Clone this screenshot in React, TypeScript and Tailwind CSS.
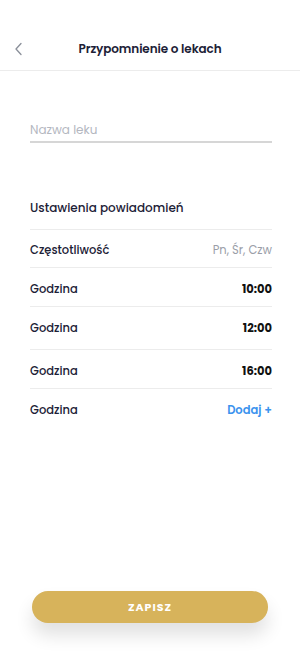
const font = { fontFamily: '"Poppins", Inter, "Noto Sans", sans-serif' };

const rows = [
  { label: "Godzina", value: "10:00" },
  { label: "Godzina", value: "12:00" },
  { label: "Godzina", value: "16:00" },
];

const App = () => {
  return (
    <div className="w-[300px] h-[655px] bg-white flex flex-col" style={font}>
      <div className="h-[71px] border-b border-[#ececec] flex items-end pb-[12px] relative">
        <button className="absolute left-[13px] bottom-[14px] text-[#8a8f99]">
          <svg width="12" height="14" viewBox="0 0 12 14" fill="none">
            <path d="M8 1.5L3 7l5 5.5" stroke="currentColor" strokeWidth="1.3" strokeLinecap="round" strokeLinejoin="round" />
          </svg>
        </button>
        <h1 className="w-full text-center text-[12px] font-semibold text-[#1c2136] tracking-[-0.1px]">
          Przypomnienie o lekach
        </h1>
      </div>

      <div className="pl-[30px] pr-[28px] flex flex-col">
        <div className="mt-[50px] pb-[2px] border-b-2 border-[#d6d6d6] text-[12px] text-[#b4b7bf]">
          Nazwa leku
        </div>

        <h2 className="mt-[56px] pb-[12px] text-[12px] font-medium text-[#1c2136] border-b border-[#ececec]">
          Ustawienia powiadomień
        </h2>

        <div className="flex justify-between items-start pt-[12px] h-[38px] border-b border-[#ececec] text-[11.5px]">
          <span className="font-medium text-[#1c2136]">Częstotliwość</span>
          <span className="text-[#9a9ea8]">Pn, Śr, Czw</span>
        </div>

        {rows.map((r, i) => (
          <div
            key={i}
            className={`flex justify-between items-start pt-[13px] border-b border-[#ececec] text-[11.5px] ${i === 1 ? "h-[43px]" : "h-[39px]"}`}
          >
            <span className="font-medium text-[#1c2136]">{r.label}</span>
            <span className="font-bold text-[#111]">{r.value}</span>
          </div>
        ))}

        <div className="flex justify-between items-start pt-[13px] h-[43px] text-[11.5px]">
          <span className="font-medium text-[#1c2136]">Godzina</span>
          <span className="font-semibold text-[#3b93ee]">Dodaj +</span>
        </div>
      </div>

      <div className="mt-auto mb-[32px] px-[32px]">
        <button className="w-full h-[32px] rounded-full bg-[#d7b35b] text-white text-[11px] font-bold tracking-[1px] shadow-[0_12px_18px_rgba(0,0,0,0.12)]">
          ZAPISZ
        </button>
      </div>
    </div>
  );
};

export default App;
